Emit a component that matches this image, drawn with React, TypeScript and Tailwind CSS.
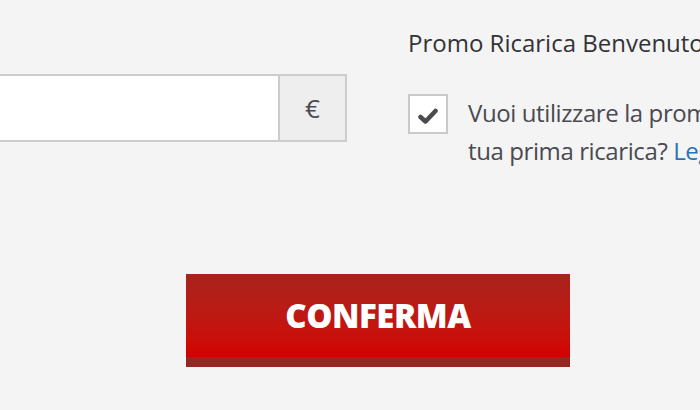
export default function App() {
  return (
    <div
      className="relative h-[410px] w-[700px] overflow-hidden bg-[#f4f4f4] text-[#4a4a50]"
      style={{ fontFamily: '"Open Sans", "Liberation Sans", sans-serif' }}
    >
      <div className="flex items-start pt-[26px]">
        <div className="w-[347px] shrink-0 pt-[48px]">
          <div className="flex h-[68px] border-2 border-l-0 border-[#cccccc]">
            <input className="h-full flex-1 bg-white outline-none" />
            <div className="flex w-[67px] items-center justify-center border-l-2 border-[#cccccc] bg-[#eeeeee] text-[26px] text-[#4a4a50]">
              €
            </div>
          </div>
        </div>
        <div className="ml-[61px] shrink-0 whitespace-nowrap">
          <div className="text-[24px] leading-[34px] text-[#333336]">Promo Ricarica Benvenuto</div>
          <div className="mt-[34px] flex gap-[20px]">
            <div className="flex h-[40px] w-[40px] shrink-0 items-center justify-center border-2 border-[#c9c9cc] bg-white pt-[4px]">
              <svg width="20" height="16" viewBox="0 0 20 16">
                <path d="M2.5 9l5 4.5L17.5 3" fill="none" stroke="#4a4a50" strokeWidth="4.5" strokeLinecap="round" strokeLinejoin="round" />
              </svg>
            </div>
            <div className="text-[24px] leading-[38px] tracking-[-0.4px]">
              <div>Vuoi utilizzare la promo sulla</div>
              <div>
                tua prima ricarica? <span className="text-[#2a72b5]">Leggi</span>
              </div>
            </div>
          </div>
        </div>
      </div>
      <div className="ml-[186px] mt-[104px] w-[384px]">
        <button className="flex h-[83px] w-full items-center justify-center bg-gradient-to-b from-[#a8221c] to-[#d40000] text-[33px] font-extrabold tracking-[-0.5px] text-white">
          CONFERMA
        </button>
        <div className="h-[10px] bg-[#94271f]" />
      </div>
    </div>
  )
}
